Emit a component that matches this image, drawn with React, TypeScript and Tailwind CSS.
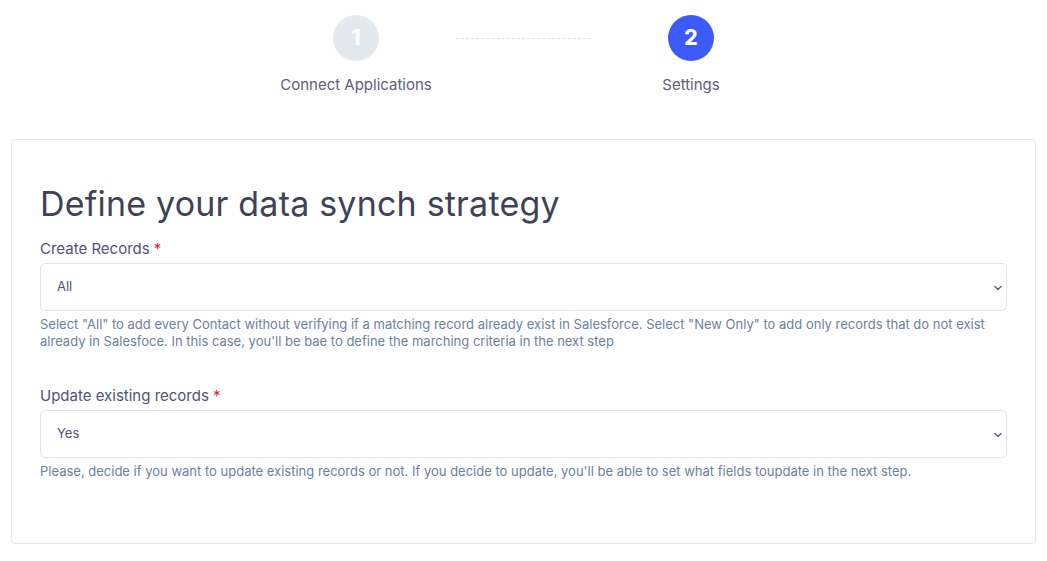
import { ChevronDown } from "lucide-react";

const FONT = { fontFamily: "Inter, 'Noto Sans', sans-serif" };

function Step({ n, label, active }: { n: number; label: string; active?: boolean }) {
  return (
    <div className="flex w-[200px] flex-col items-center">
      <div
        className={
          "flex h-[46px] w-[46px] items-center justify-center rounded-full text-[21px] font-extrabold text-white " +
          (active ? "bg-[#3d5bfd]" : "bg-[#e4e9ef]")
        }
      >
        {n}
      </div>
      <div className="mt-[13px] text-[15px] text-[#5b6078]">{label}</div>
    </div>
  );
}

function Field({
  label,
  value,
  help,
}: {
  label: string;
  value: string;
  help: React.ReactNode;
}) {
  return (
    <div>
      <label className="block text-[15px] leading-[20px] text-[#4e5474]">
        {label} <span className="text-[#e8173d]">*</span>
      </label>
      <div className="relative mt-[4px] h-[48px] w-full rounded-[5px] border border-[#e3e5ee] bg-white">
        <div className="flex h-full items-center pl-[16px] text-[13px] text-[#4e5474]">
          {value}
        </div>
        <ChevronDown
          className="absolute right-[2px] top-[18px] text-[#5e6480]"
          size={12}
          strokeWidth={3}
        />
      </div>
      <p className="mt-[5px] text-[13px] leading-[17px] text-[#6c81a0]">{help}</p>
    </div>
  );
}

export default function App() {
  return (
    <div className="min-h-[561px] bg-white" style={FONT}>
      <div className="flex items-start justify-center pt-[15px]">
        <Step n={1} label="Connect Applications" />
        <div className="mt-[23px] w-[135px] border-t border-dashed border-[#dfe3ea]" />
        <Step n={2} label="Settings" active />
      </div>

      <div className="mx-[11px] mt-[42px] h-[405px] rounded-[4px] border border-[#e6e8ec] px-[28px] pt-[42px]">
        <h1 className="text-[34px] leading-[44px] tracking-[0.2px] text-[#3f4257]">
          Define your data synch strategy
        </h1>
        <div className="mt-[13px]">
          <Field
            label="Create Records"
            value="All"
            help={
              <>
                Select "All" to add every Contact without verifying if a matching record already
                exist in Salesforce. Select "New Only" to add only records that do not exist
                <br />
                already in Salesfoce. In this case, you'll be bae to define the marching criteria
                in the next step
              </>
            }
          />
        </div>
        <div className="mt-[36px]">
          <Field
            label="Update existing records"
            value="Yes"
            help="Please, decide if you want to update existing records or not. If you decide to update, you'll be able to set what fields toupdate in the next step."
          />
        </div>
      </div>
    </div>
  );
}
